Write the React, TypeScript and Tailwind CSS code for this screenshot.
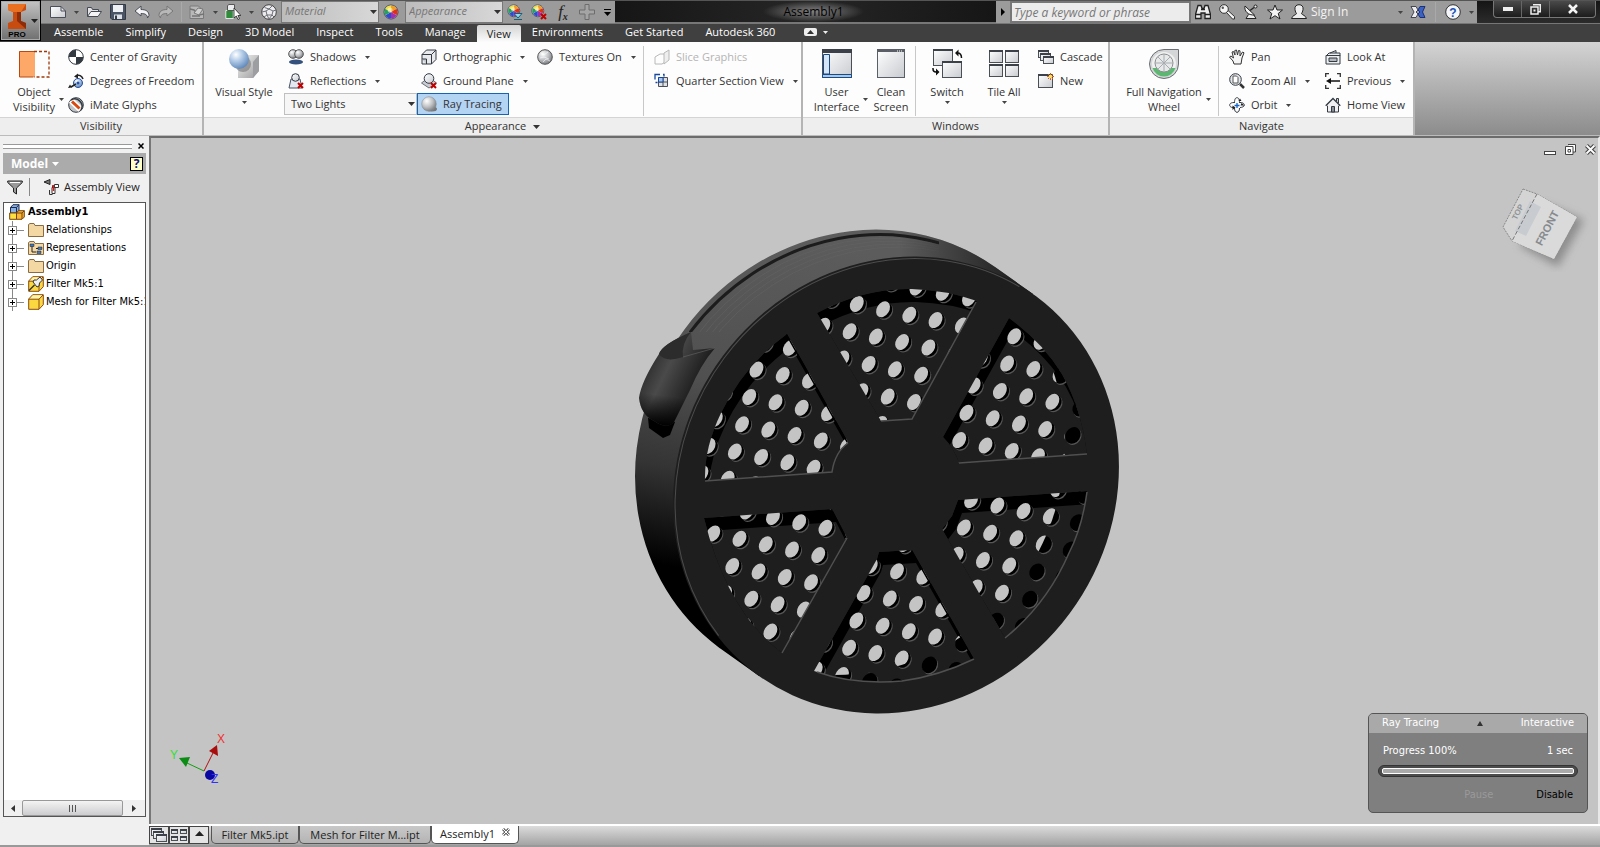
import type { ReactNode } from 'react'

const HOLE_ORIGIN = { x: 783.7, y: 375 }
const HOLE_U = { x: 26.25, y: 5.4 }
const HOLE_V = { x: -7.2, y: 27.3 }

const HOLES = Array.from({ length: 30 * 24 }, (_, n) => {
  const i = (n % 30) - 8
  const j = Math.floor(n / 30) - 8
  return {
    x: HOLE_ORIGIN.x + i * HOLE_U.x + j * HOLE_V.x,
    y: HOLE_ORIGIN.y + i * HOLE_U.y + j * HOLE_V.y,
  }
}).filter((h) => h.x > 690 && h.x < 1100 && h.y > 275 && h.y < 695)

const WINDOWS_PATH = [
  'M818 313 Q865 288 913 289 Q947 290 978 301 L913 419 L882 421 Z',
  'M1010 318 Q1044 343 1063 374 Q1083 410 1088 454 L960 463 Q955 448 944 437 Z',
  'M1088 491 Q1083 528 1070 553 Q1048 604 1006 638 L943 529 L953 516 L959 500 Z',
  'M880 552 L913 550 L975 659 Q940 676 903 681 Q855 685 815 671 L878 559 Z',
  'M705 518 L833 509 L848 538 L783 653 Q728 612 705 518 Z',
  'M788 334 L849 442 Q836 452 833 472 L706 481 Q705 448 722 413 Q745 365 788 334 Z',
].join(' ')

const LIT_EDGES =
  'M977 302 L913 419 L882 421 M1088 454 L960 463 M1088 492 Q1083 528 1070 553 Q1048 604 1006 638 M975 659 Q940 676 903 681 Q855 685 818 672 M848 538 L783 653 M849 443 Q836 452 833 472 L706 481'

const LUG_PATH =
  'M692 332Q664 344 660 354Q642 382 640 398Q642 415 655 421Q668 430 675 422L691 390Q702 364 716 348L694 350z'

function Arrow({ className = '' }: { className?: string }) {
  return (
    <svg className={`shrink-0 ${className}`} width="7" height="4" viewBox="0 0 7 4" fill="currentColor" aria-hidden>
      <path d="M0 0h7L3.500 4z" />
    </svg>
  )
}

function SmallArrow() {
  return (
    <svg className="shrink-0" width="5" height="3" viewBox="0 0 5 3" fill="#444" aria-hidden>
      <path d="M0 0h5L2.500 3z" />
    </svg>
  )
}

function Icon({ size = 16, box = 16, children }: { size?: number; box?: number; children: ReactNode }) {
  return (
    <svg className="shrink-0" width={size} height={size} viewBox={`0 0 ${box} ${box}`} fill="none" aria-hidden>
      {children}
    </svg>
  )
}

function Ball({ x = 8, y = 8, r = 6 }: { x?: number; y?: number; r?: number }) {
  return <circle cx={x} cy={y} r={r} fill="url(#steel)" stroke="#555" />
}

function RedX({ x = 10, y = 10 }: { x?: number; y?: number }) {
  return <path d={`M${x} ${y}l5 5m0 -5l-5 5`} stroke="#c00000" strokeWidth="2" />
}

function Wheel() {
  return (
    <>
      <circle cx="8" cy="8" r="7" fill="#fff" stroke="#445" />
      <path d="M8 8V1.500A6.500 6.500 0 0 1 13.600 4.700Z" fill="#f0a020" />
      <path d="M8 8L13.600 4.700A6.500 6.500 0 0 1 13.600 11.300Z" fill="#e03018" />
      <path d="M8 8L13.600 11.300A6.500 6.500 0 0 1 8 14.500Z" fill="#a030b0" />
      <path d="M8 8V14.500A6.500 6.500 0 0 1 2.400 11.300Z" fill="#3048d0" />
      <path d="M8 8L2.400 11.300A6.500 6.500 0 0 1 2.400 4.700Z" fill="#28a060" />
      <path d="M8 8L2.400 4.700A6.500 6.500 0 0 1 8 1.500Z" fill="#f0e040" />
      <circle cx="7" cy="6" r="2.500" fill="#fff" opacity="0.5" />
    </>
  )
}

function MiniWindow({ x, y, w, h }: { x: number; y: number; w: number; h: number }) {
  return (
    <>
      <rect x={x + 0.5} y={y + 0.5} width={w - 1} height={h - 1} fill="url(#pane)" stroke="#4a4e55" />
      <rect x={x} y={y} width={w} height={Math.max(2, Math.round(h / 8))} fill="#3c4048" />
    </>
  )
}

/* Gradients shared by every icon and by the model */
function Defs() {
  return (
    <svg className="absolute h-0 w-0" aria-hidden>
      <defs>
        <radialGradient id="steel" cx="0.35" cy="0.3" r="0.8">
          <stop offset="0" stopColor="#fff" />
          <stop offset="0.5" stopColor="#bfc1c4" />
          <stop offset="1" stopColor="#6b6e72" />
        </radialGradient>
        <radialGradient id="blueBall" cx="0.35" cy="0.28" r="0.8">
          <stop offset="0" stopColor="#fff" />
          <stop offset="0.4" stopColor="#b4cce8" />
          <stop offset="1" stopColor="#5580b4" />
        </radialGradient>
        <linearGradient id="pane" x1="0" y1="0" x2="1" y2="1">
          <stop offset="0" stopColor="#fff" />
          <stop offset="1" stopColor="#c8cbd0" />
        </linearGradient>
        <linearGradient id="cubeSide" x1="0" y1="0" x2="1" y2="1">
          <stop offset="0" stopColor="#f4f4f4" />
          <stop offset="1" stopColor="#9a9a9c" />
        </linearGradient>
      </defs>
    </svg>
  )
}

function TitleIcon({ label, children }: { label: string; children: ReactNode }) {
  return (
    <button aria-label={label} className="flex h-6 w-6 shrink-0 items-center justify-center">
      {children}
    </button>
  )
}

function TitleArrow({ label }: { label: string }) {
  return (
    <button aria-label={label} className="flex h-6 w-3 shrink-0 items-center justify-center">
      <SmallArrow />
    </button>
  )
}

function TitleSelect({ label }: { label: string }) {
  return (
    <span className="relative h-[22px] w-[98px] shrink-0 border border-[#777] bg-linear-to-r from-[#bcbcbc] to-[#d8d8d8]">
      <select aria-label={label} className="block h-5 w-full appearance-none px-[3px] pb-[2px] text-[11px] leading-[18px] text-[#777] italic outline-none">
        <option>{label}</option>
      </select>
      <Arrow className="pointer-events-none absolute top-2 right-[1px] text-[#333]" />
    </span>
  )
}

function TitleBar() {
  return (
    <header className="flex h-6 border-t border-b border-t-[#555] border-b-[#777] bg-[#9b9b9b]">
      <div className="flex shrink-0 items-center pl-[46px]">
        <TitleIcon label="New">
          <Icon>
            <path d="M.5 2.500H11L15.500 7v6.500H.5z" fill="url(#pane)" stroke="#4a4e58" />
            <path d="M11 2.500V7h4.500" stroke="#4a4e58" />
          </Icon>
        </TitleIcon>
        <TitleArrow label="New options" />
        <TitleIcon label="Open">
          <Icon>
            <path d="M1.500 12.500v-9h4l1 2h6v2" fill="#e4e4e6" stroke="#444a54" />
            <path d="M1.500 12.500L5 7.500h10.500L12 12.500z" fill="#f4f4f6" stroke="#444a54" />
          </Icon>
        </TitleIcon>
        <TitleIcon label="Save">
          <Icon>
            <path d="M.5.5h15v15H2l-1.500-1.500z" fill="#4a5464" stroke="#333a46" />
            <path d="M3 1h10v7H3z" fill="#eef0f4" />
            <path d="M4 10.500h8V15H4z" fill="#dde0e6" />
            <path d="M5 11.500h2V15H5z" fill="#333a46" />
          </Icon>
        </TitleIcon>
        <TitleIcon label="Undo">
          <Icon>
            <path d="M1 7l6-5v3.500c5 0 8 2 8 6l-1.500 2.500c0-3-2-4.500-6.500-4.500V12z" fill="#f4f4f6" stroke="#4a4e58" />
          </Icon>
        </TitleIcon>
        <TitleIcon label="Redo">
          <Icon>
            <path d="M15 7L9 2v3.500c-5 0-8 2-8 6L2.500 14c0-3 2-4.500 6.500-4.500V12z" fill="#b8b8b8" stroke="#777" />
          </Icon>
        </TitleIcon>
        <span className="mx-[3px] h-5 w-px bg-[#a9a9a9]" />
        <TitleIcon label="Update">
          <Icon>
            <path d="M1 2h8.500L14.500 7v7.500H1z" fill="#b8b8b8" stroke="#7a7a7a" />
            <path d="M1 5l4 1 5 5 5-1M3 12h8" stroke="#747474" strokeWidth="1.500" />
            <path d="M9 4l5 1-4 6-5-2z" fill="#d0d0d0" stroke="#7a7a7a" />
          </Icon>
        </TitleIcon>
        <TitleArrow label="Update options" />
        <TitleIcon label="Select">
          <Icon>
            <path d="M.8 6.500h7.500v8H.8z" fill="#2f8a3a" stroke="#e4e8e4" />
            <path d="M2.500 1.500L4 .5h5.500v5l-1 1h-6z" fill="#ececee" stroke="#555" />
            <path d="M9 4v10l2.300-2 1.700 3.500 1.500-.8-1.600-3.200h3z" fill="#fff" stroke="#222" strokeWidth="0.8" />
          </Icon>
        </TitleIcon>
        <TitleArrow label="Select options" />
        <TitleIcon label="Material browser">
          <Icon>
            <circle cx="8" cy="8" r="7.300" fill="#ececee" stroke="#444" />
            <path
              d="M3.500 3.500L8 5l3-3M1 8l4-1 3-2 4 2 3-1M5 7l1 4 5 0 1-4M6 11l-3 2M11 11l2 2M6 11l2 4 3-4"
              stroke="#6c7078"
            />
          </Icon>
        </TitleIcon>
        <TitleSelect label="Material" />
        <TitleIcon label="Appearance browser">
          <Icon>
            <Wheel />
          </Icon>
        </TitleIcon>
        <span className="w-[2px]" />
        <TitleSelect label="Appearance" />
        <TitleIcon label="Adjust appearance">
          <Icon>
            <g transform="scale(.85)">
              <Wheel />
            </g>
            <path d="M7 9.500h8L11 14z" fill="#8fd8f0" stroke="#14607c" />
            <path d="M7 15.500h8" stroke="#14607c" />
          </Icon>
        </TitleIcon>
        <TitleIcon label="Clear appearance">
          <Icon>
            <g transform="scale(.85)">
              <Wheel />
            </g>
            <RedX />
          </Icon>
        </TitleIcon>
        <TitleIcon label="Parameters">
          <span className="font-['Liberation_Serif',serif] text-[17px] leading-5 text-[#222] italic">
            f<sub className="text-[10px] font-bold">x</sub>
          </span>
        </TitleIcon>
        <TitleIcon label="Add">
          <Icon>
            <path d="M6 .5h4V6h5.500v4H10v5.500H6V10H.5V6H6z" fill="#a4a4a4" stroke="#6c6c6c" />
          </Icon>
        </TitleIcon>
        <button aria-label="Customize" className="flex w-4 flex-col items-center gap-[2px] text-black">
          <span className="h-px w-[7px] bg-black" />
          <Arrow />
        </button>
      </div>

      <div className="flex flex-1 items-center justify-center border-b border-[#777] bg-linear-to-r from-[#161616] via-[#262626] to-[#161616] pl-4">
        <span className="bg-[radial-gradient(closest-side,#808080,#555,transparent)] px-5 text-[12px] leading-[21px] text-black">
          Assembly1
        </span>
      </div>

      <div className="flex shrink-0 items-center">
        <button aria-label="Collapse search" className="flex w-[14px] justify-center">
          <svg width="4" height="8" viewBox="0 0 4 8" aria-hidden>
            <path d="M0 0L4 4L0 8z" />
          </svg>
        </button>
        <input
          aria-label="Search"
          placeholder="Type a keyword or phrase"
          className="h-[22px] w-[181px] border-2 border-[#777] bg-[#ececec] px-[2px] text-[12px] italic outline-none placeholder:text-[#777]"
        />
        <TitleIcon label="Find">
          <Icon>
            <path d="M3 1.500h3l1 3h2l1-3h3l2.500 9v4H10V9H6v5.500H.5v-4z" fill="#eee" stroke="#222" strokeWidth="1.300" />
            <path d="M6 5.500h4M.5 10.500H6M10 10.500h5.500" stroke="#222" strokeWidth="1.300" />
          </Icon>
        </TitleIcon>
        <TitleIcon label="Subscription">
          <Icon>
            <path d="M7.500 8.500l6 6.500h2v-2.500L9 6.500" fill="#f4f4f4" stroke="#333" />
            <circle cx="5" cy="5" r="4.300" fill="#f4f4f4" stroke="#333" />
            <circle cx="3.800" cy="3.800" r="1.200" fill="#555" />
          </Icon>
        </TitleIcon>
        <TitleIcon label="Communication">
          <Icon>
            <path d="M5.500 10.500L3 14.500h10l-2.500-4" fill="#eee" stroke="#222" />
            <path d="M2 2c-1 5 3 9.500 9.500 9z" fill="#f4f4f4" stroke="#222" />
            <path d="M7 6.500l4-3" stroke="#222" strokeWidth="1.300" />
            <circle cx="12.500" cy="2.500" r="1.500" fill="#eee" stroke="#222" />
          </Icon>
        </TitleIcon>
        <TitleIcon label="Favorites">
          <Icon>
            <path d="M8 1l2 5h5.500l-4.300 3.500L13 15l-5-3.300L3 15l1.800-5.500L.5 6H6z" fill="#f4f4f4" stroke="#222" />
          </Icon>
        </TitleIcon>
        <TitleIcon label="Account">
          <Icon>
            <path d="M8 .7c3 0 4.500 2 4 5-.3 2-1 3-1.500 4 1 1.500 4 1.500 5 4.800H.5c1-3.300 4-3.300 5-4.800C5 8.700 4.300 7.700 4 5.700c-.5-3 1-5 4-5z" fill="#eee" stroke="#222" />
          </Icon>
        </TitleIcon>
        <button className="flex w-[92px] items-center justify-between text-[12px] leading-5 text-[#f4f4f4]">
          Sign In
          <SmallArrow />
        </button>
        <span className="w-[3px]" />
        <TitleIcon label="Exchange">
          <Icon>
            <path d="M1 2.500h5L8 6l-2 2 2 2-2 3.500H1L4 8z" fill="#eee" stroke="#445" />
            <path d="M15 2.500h-5L8 6l2 2-2 2 2 3.500h5L12.500 8z" fill="#3a62c0" stroke="#1c2f78" />
          </Icon>
        </TitleIcon>
        <span className="mx-[5px] h-5 w-px bg-[#a9a9a9]" />
        <TitleIcon label="Help">
          <Icon>
            <circle cx="8" cy="8" r="7.300" fill="#f4f6fa" stroke="#333" />
            <text x="8" y="12.500" textAnchor="middle" className="fill-[#1a50b8] font-['Liberation_Sans',sans-serif] text-[12px] font-bold">
              ?
            </text>
          </Icon>
        </TitleIcon>
        <TitleArrow label="Help options" />
      </div>

      <div className="flex w-[123px] shrink-0 justify-end bg-linear-to-b from-[#151515] to-[#2c2c2c] pr-1">
        <div className="flex h-[17px] rounded-b-[4px] border border-t-0 border-[#777] bg-linear-to-b from-[#4a4a4a] to-[#1c1c1c]">
          <button aria-label="Minimize" className="flex w-[28px] items-center justify-center border-r border-[#666]">
            <span className="h-1 w-[10px] bg-[#eee]" />
          </button>
          <button aria-label="Restore" className="flex w-[28px] items-center justify-center border-r border-[#666]">
            <Icon size={11} box={11}>
              <path d="M3 .8h7.300v7H8M1 3h7v7H1z" stroke="#eee" strokeWidth="1.500" />
              <path d="M3.500 5.500h2v2h-2z" fill="#eee" />
            </Icon>
          </button>
          <button aria-label="Close" className="flex w-[45px] items-center justify-center">
            <Icon size={10} box={10}>
              <path d="M1 1l8 8M9 1L1 9" stroke="#f4f4f4" strokeWidth="2.500" />
            </Icon>
          </button>
        </div>
      </div>
    </header>
  )
}

const TABS = [
  'Assemble',
  'Simplify',
  'Design',
  '3D Model',
  'Inspect',
  'Tools',
  'Manage',
  'View',
  'Environments',
  'Get Started',
  'Autodesk 360',
]

function TabRow() {
  return (
    <nav className="flex h-[18px] items-stretch bg-[#404040] pl-[43px] text-[11px] leading-4 text-white">
      {TABS.map((tab) => (
        <button
          key={tab}
          className={
            tab === 'View'
              ? 'mt-px rounded-t-[2px] bg-linear-to-b from-[#d4d4d4] to-[#fcfcfc] px-[10px] text-[#222]'
              : 'px-[11px] pb-[2px]'
          }
        >
          {tab}
        </button>
      ))}
      <button aria-label="Minimize ribbon" className="ml-[18px] flex items-center gap-[6px] pb-[2px]">
        <span className="flex h-2 w-[13px] items-center justify-center rounded-[2px] bg-[#eee] text-[#333]">
          <Arrow className="rotate-180" />
        </span>
        <svg width="5" height="3" viewBox="0 0 5 3" fill="#eee" aria-hidden>
          <path d="M0 0h5L2.500 3z" />
        </svg>
      </button>
    </nav>
  )
}

function Panel({ title, arrow, className, children }: { title: string; arrow?: boolean; className: string; children: ReactNode }) {
  return (
    <section className={`flex shrink-0 flex-col border-r-2 border-[#b4b4b4] bg-[#fdfdfd] ${className}`}>
      <div className="flex h-[75px] pt-[3px]">{children}</div>
      <div className="flex h-[18px] items-center justify-center gap-[7px] border-t border-[#d4d4d4] bg-[#eee]">
        {title}
        {arrow && <Arrow />}
      </div>
    </section>
  )
}

function Row({ icon, label, arrow, disabled }: { icon: ReactNode; label: string; arrow?: boolean; disabled?: boolean }) {
  return (
    <button disabled={disabled} className="flex h-6 items-center gap-[6px] whitespace-nowrap disabled:text-[#b4b4b4]">
      {icon}
      {label}
      {arrow && (
        <span className="pl-[3px]">
          <SmallArrow />
        </span>
      )}
    </button>
  )
}

function BigButton({ icon, lines, arrow, className }: { icon: ReactNode; lines: string[]; arrow?: 'side' | 'below'; className: string }) {
  return (
    <button className={`flex shrink-0 flex-col items-center pt-[3px] leading-[15px] whitespace-nowrap ${className}`}>
      {icon}
      <span className="flex items-center gap-1 pt-1">
        {arrow === 'side' && <span className="w-[5px]" />}
        <span>
          {lines.map((line) => (
            <span key={line} className="block">
              {line}
            </span>
          ))}
        </span>
        {arrow === 'side' && <SmallArrow />}
      </span>
      {arrow === 'below' && (
        <span className="pt-[2px]">
          <SmallArrow />
        </span>
      )}
    </button>
  )
}

function Divider() {
  return <span className="my-px w-px shrink-0 bg-[#c8c8c8]" />
}

function Ribbon() {
  return (
    <div className="flex h-[93px] text-[11px] text-[#333]">
      <Panel title="Visibility" className="w-[204px]">
        <BigButton
          className="w-[68px]"
          arrow="side"
          lines={['Object', 'Visibility']}
          icon={
            <Icon size={32} box={32}>
              <path d="M1 3h16v26H1z" fill="#fda868" />
              <path d="M1.500 29V3.500H16" stroke="#b84a10" />
              <path d="M1.500 29h14" stroke="#b84a10" />
              <path d="M16 3.500h15V29H16" stroke="#a03808" strokeDasharray="3 2" strokeWidth="1.300" />
            </Icon>
          }
        />
        <div>
          <Row
            label="Center of Gravity"
            icon={
              <Icon>
                <circle cx="8" cy="8" r="7.300" fill="#fff" stroke="#333a42" />
                <path d="M8 8V.7A7.300 7.300 0 0 0 .7 8zM8 8v7.300A7.300 7.300 0 0 0 15.300 8z" fill="#333a42" />
              </Icon>
            }
          />
          <Row
            label="Degrees of Freedom"
            icon={
              <Icon>
                <circle cx="10" cy="10" r="4.500" fill="url(#blueBall)" stroke="#2850a0" />
                <circle cx="10" cy="10" r="1.500" fill="#2850a0" />
                <path d="M8 11l-5 3M8 3c3-2 6 0 7 3" stroke="#222" strokeWidth="1.500" />
                <path d="M0 15l2-3.500 2 3zM6 3.500L10 .5v5z" fill="#222" />
              </Icon>
            }
          />
          <Row
            label="iMate Glyphs"
            icon={
              <Icon>
                <circle cx="8" cy="8" r="7.300" fill="#c0c4c8" stroke="#333a42" />
                <path d="M3 3.500l9.500 9" stroke="#fff" strokeWidth="6" />
                <path d="M4 4.500l7.500 7" stroke="#d84810" strokeWidth="3" />
                <path d="M3 3a7.300 7.300 0 0 1 10 10" stroke="#333a42" strokeWidth="1.500" />
              </Icon>
            }
          />
        </div>
      </Panel>

      <Panel title="Appearance" arrow className="w-[599px]">
        <BigButton
          className="w-[80px]"
          arrow="below"
          lines={['Visual Style']}
          icon={
            <Icon size={32} box={32}>
              <path d="M10 14l8-7h13v16l-6 7H10z" fill="url(#cubeSide)" />
              <path d="M25 14l6-7v16l-6 7z" fill="#9c9ea2" />
              <circle cx="15" cy="16" r="8" fill="#777" opacity="0.6" />
              <circle cx="11" cy="11" r="10" fill="url(#blueBall)" />
            </Icon>
          }
        />
        <div className="w-[133px]">
          <div className="pl-1">
            <Row
              arrow
              label="Shadows"
              icon={
                <Icon>
                  <ellipse cx="8" cy="13" rx="7" ry="2.500" fill="#34507c" />
                  <Ball x={5} y={5} r={4.300} />
                  <Ball x={11} y={5} r={4.300} />
                </Icon>
              }
            />
            <Row
              arrow
              label="Reflections"
              icon={
                <Icon>
                  <path d="M1 15l2-9h9l2 9z" fill="#e4e8f0" stroke="#4a5464" />
                  <circle cx="7.500" cy="4.500" r="3.800" fill="url(#pane)" stroke="#333a46" />
                  <RedX />
                </Icon>
              }
            />
          </div>
          <span className="relative block h-[22px] w-[133px] border border-[#c0c0c0] bg-[#f6f6f6]">
            <select aria-label="Lights" className="h-full w-full appearance-none px-[6px] leading-5 outline-none">
              <option>Two Lights</option>
            </select>
            <Arrow className="pointer-events-none absolute top-2 right-[1px]" />
          </span>
        </div>
        <div className="w-[120px]">
          <div className="pl-1">
            <Row
              arrow
              label="Orthographic"
              icon={
                <Icon>
                  <path d="M1 5.500L5.500 1H15v9.500L10.500 15H1z" fill="#e8eaee" stroke="#333a42" />
                  <path d="M1 5.500h9.500V15M10.500 5.500L15 1" stroke="#333a42" />
                  <path d="M1 10h4.500v5" stroke="#333a42" fill="#c8ccd2" />
                </Icon>
              }
            />
            <Row
              arrow
              label="Ground Plane"
              icon={
                <Icon>
                  <path d="M.5 10L5 6.500h6l4.500 3.500L8 15z" fill="#c8ccd2" stroke="#6a6e76" />
                  <circle cx="8" cy="5.500" r="4.800" fill="url(#pane)" stroke="#333a46" />
                  <RedX />
                </Icon>
              }
            />
          </div>
          <button className="flex h-[22px] w-[92px] items-center gap-[6px] border border-[#1464b8] bg-[#b4d4f4] pl-[3px] whitespace-nowrap">
            <Icon>
              <ellipse cx="11" cy="13" rx="5" ry="2.500" fill="#777" />
              <circle cx="8" cy="8" r="7.300" fill="url(#steel)" stroke="#888" strokeWidth="0.500" />
            </Icon>
            Ray Tracing
          </button>
        </div>
        <div className="w-[106px]">
          <Row
            arrow
            label="Textures On"
            icon={
              <Icon>
                <Ball r={7.300} />
                <path d="M4 4l3 2 4-3M3 9l4-1 5 2M6 13l3-3 4 2" stroke="#fff" opacity="0.6" />
              </Icon>
            }
          />
        </div>
        <Divider />
        <div className="pl-[10px]">
          <Row
            disabled
            label="Slice Graphics"
            icon={
              <Icon>
                <path d="M1 8l5-3h5v8l-3 2H1z" stroke="#b8b8b8" />
                <path d="M10 4l5-3v10l-5 4z" fill="#eee" stroke="#b8b8b8" />
              </Icon>
            }
          />
          <Row
            arrow
            label="Quarter Section View"
            icon={
              <Icon>
                <path d="M4.500 4.500h9v9h-9zM9 4.500v9M4.500 9h9" fill="#dde0e4" stroke="#4a4e58" />
                <path d="M1 6.500V1.500h5M9 1.500h1v2M1.500 9.500h2" stroke="#1448a0" strokeWidth="1.300" />
                <path d="M4.500 4.500h4.500V9H4.500z" fill="#a8c4e8" stroke="#1448a0" />
              </Icon>
            }
          />
        </div>
      </Panel>

      <Panel title="Windows" className="w-[307px]">
        <BigButton
          className="w-[67px]"
          arrow="side"
          lines={['User', 'Interface']}
          icon={
            <Icon size={32} box={32}>
              <MiniWindow x={1} y={1} w={30} h={29} />
              <path d="M2.500 6.500h6V26h-6z" fill="#d4e6f8" stroke="#1c4a84" />
              <path d="M1.500 26.500h29v3h-29z" fill="#a8c8e8" stroke="#1c4a84" />
            </Icon>
          }
        />
        <BigButton
          className="w-[42px]"
          lines={['Clean', 'Screen']}
          icon={
            <Icon size={32} box={32}>
              <rect x="2.500" y="1.500" width="27" height="28" fill="url(#pane)" stroke="#5a5e66" />
              <path d="M2 3h28" stroke="#5a5e66" strokeWidth="2" />
              <path d="M22 3h6" stroke="#fff" strokeDasharray="1 1" />
            </Icon>
          }
        />
        <span className="w-[3px]" />
        <Divider />
        <BigButton
          className="w-[62px]"
          arrow="below"
          lines={['Switch']}
          icon={
            <Icon size={32} box={32}>
              <MiniWindow x={2} y={1} w={20} h={17} />
              <MiniWindow x={11} y={13} w={20} h={17} />
              <path d="M25 5h1.500q4 0 4 5M2 20v1q0 3 3 3" stroke="#111" strokeWidth="1.500" />
              <path d="M24 5l3.500-3.500v7zM8.500 24L5 20.500v7z" fill="#111" />
            </Icon>
          }
        />
        <BigButton
          className="w-[52px]"
          arrow="below"
          lines={['Tile All']}
          icon={
            <Icon size={32} box={32}>
              <MiniWindow x={1} y={2} w={14} h={13} />
              <MiniWindow x={17} y={2} w={14} h={13} />
              <MiniWindow x={1} y={16} w={14} h={13} />
              <MiniWindow x={17} y={16} w={14} h={13} />
            </Icon>
          }
        />
        <div className="pl-[8px]">
          <Row
            label="Cascade"
            icon={
              <Icon>
                <MiniWindow x={0} y={1} w={11} h={8} />
                <MiniWindow x={2} y={4} w={11} h={8} />
                <MiniWindow x={5} y={7} w={11} h={8} />
              </Icon>
            }
          />
          <Row
            label="New"
            icon={
              <Icon>
                <MiniWindow x={0} y={1} w={15} h={14} />
                <path d="M12.500 0v7M9 3.500h7M10 1l5 5M15 1l-5 5" stroke="#d85818" />
                <circle cx="12.500" cy="3.500" r="1.800" fill="#fce060" />
              </Icon>
            }
          />
        </div>
      </Panel>

      <Panel title="Navigate" className="w-[305px]">
        <BigButton
          className="w-[108px]"
          arrow="side"
          lines={['Full Navigation', 'Wheel']}
          icon={
            <Icon size={32} box={32}>
              <path d="M16 1.500h14.500V16A14.500 14.500 0 1 1 16 1.500z" fill="#d4d6d8" stroke="#6a6e72" />
              <circle cx="16" cy="16" r="12" fill="#f0f0f0" />
              <path d="M4.500 20h23a12 12 0 0 1-23 0z" fill="#5cb870" />
              <circle cx="16" cy="15" r="9" fill="#e8eaea" stroke="#8a8e92" />
              <path d="M16 6v18M7 15h18M10 9l12 12M22 9L10 21" stroke="#a8acb0" />
            </Icon>
          }
        />
        <Divider />
        <div className="w-[106px] pl-[10px]">
          <Row
            label="Pan"
            icon={
              <Icon>
                <path
                  d="M5 15l-1-3-3.500-4 1.500-1 2.500 2L3 3l1.500-.5L6 6 5.800 1.500 7.500 1 8.500 6 9.500 1.500l1.500.3L11 7l2.500-4 1.500.8L13 9l-1 6z"
                  fill="#f4f4f4"
                  stroke="#333"
                />
              </Icon>
            }
          />
          <Row
            arrow
            label="Zoom All"
            icon={
              <Icon>
                <circle cx="6.500" cy="6.500" r="5.800" fill="#e4e6ea" stroke="#333a42" />
                <path d="M4 3h3.500L9 4.500V10H4z" fill="#fff" stroke="#555" />
                <path d="M11 11l4 4" stroke="#333" strokeWidth="2.500" />
              </Icon>
            }
          />
          <Row
            arrow
            label="Orbit"
            icon={
              <Icon>
                <path d="M5 5.500C1 5.500.5 7.500.7 8.500S2 10.500 4 10.500M11 5.500c4 0 4.500 2 4.300 3S13 10.500 11 10.500" stroke="#333a42" />
                <path d="M5.500 6C5.500 2 6.500.7 8 .7S10.500 2 10.500 6M5.500 11c0 3 1 4.300 2.500 4.300s2.500-1.300 2.500-4.300" stroke="#333a42" />
                <path d="M3.500 8.500l3 2-3 2.500zM12.500 6l3 2.500-4 0zM9.500 4h3l-1.500-2.500z" fill="#222" />
                <path d="M8 6v5M5.500 8.500h5" stroke="#1464c8" strokeWidth="1.300" />
              </Icon>
            }
          />
        </div>
        <div>
          <Row
            label="Look At"
            icon={
              <Icon>
                <path d="M1 6.500h14V15H1zM2 6l2-2h11v3M5 4l6-2.500V4" fill="#eceef0" stroke="#333a42" />
                <path d="M4 9h8v3.500H4z" fill="#b4b8be" stroke="#333a42" />
              </Icon>
            }
          />
          <Row
            arrow
            label="Previous"
            icon={
              <Icon>
                <path d="M.7 4V.7H4M12 .7h3.300V4M15.300 12v3.300H12M4 15.300H.7V12" stroke="#333" strokeWidth="1.300" />
                <path d="M5 8h10" stroke="#111" strokeWidth="1.500" />
                <path d="M1 8l5-3v6z" fill="#111" />
              </Icon>
            }
          />
          <Row
            label="Home View"
            icon={
              <Icon>
                <path d="M11.500 4V1.500h2V6" fill="#ccc" stroke="#333a42" />
                <path d="M2.500 8v7h11V8" fill="#f0f0f2" stroke="#333a42" />
                <path d="M.7 8.700L8 1.500l7.300 7.200" fill="#f0f0f2" stroke="#333a42" strokeWidth="1.300" />
                <path d="M6.500 9.500h3V15h-3z" fill="#8a8e96" stroke="#333a42" />
              </Icon>
            }
          />
        </div>
      </Panel>
      <div className="flex-1 bg-linear-to-b from-[#d4d4d4] to-[#8c8c8c]" />
    </div>
  )
}

function FolderIcon({ nodes }: { nodes?: boolean }) {
  return (
    <Icon>
      <path d="M.5 14.500V2.500l1.500-1h4l1 2h8.500v11z" fill="#f4d8a4" stroke="#8a6c44" />
      {nodes && (
        <>
          <path d="M2 5.500h4M4 6v6h4M8 8.500h3" stroke="#222" />
          <path d="M2 4h4v2.500H2zM10 7h4v2.500h-4zM9 11h4v2.500H9z" fill="#3c78c0" stroke="#222" strokeWidth="0.500" />
        </>
      )}
    </Icon>
  )
}

function PartIcon({ pinned }: { pinned?: boolean }) {
  return (
    <Icon>
      <path d="M.7 5l4-4.300h10.600v10L11 15.300H.7z" fill="#fcd840" stroke="#8a4a10" />
      <path d="M1.500 5L5 1.300h9.500L11 5z" fill="#fff4a8" />
      <path d="M.7 5.200H11v10M11 5.200L15 1" stroke="#8a4a10" />
      {pinned && (
        <>
          <path d="M5 6l4 5 2-1 .5-3 3-3-2.500-3L8.500 4 6 4z" fill="#eee" stroke="#333" />
          <path d="M6.500 9L1 14.500" stroke="#333" strokeWidth="1.500" />
        </>
      )}
    </Icon>
  )
}

const TREE = [
  { label: 'Relationships', icon: <FolderIcon /> },
  { label: 'Representations', icon: <FolderIcon nodes /> },
  { label: 'Origin', icon: <FolderIcon /> },
  { label: 'Filter Mk5:1', icon: <PartIcon pinned /> },
  { label: 'Mesh for Filter Mk5:1', icon: <PartIcon /> },
]

function ModelBrowser() {
  return (
    <aside className="flex w-[149px] shrink-0 flex-col bg-[#f0f0f0] px-[3px]">
      <div className="flex h-[17px] items-center gap-[6px] pt-[3px]">
        <span className="h-[5px] flex-1 border-y border-[#999] bg-white" />
        <button aria-label="Close browser" className="mr-[2px]">
          <svg width="6" height="6" viewBox="0 0 6 6" aria-hidden>
            <path d="M.5.5l5 5M5.500.5l-5 5" stroke="#000" strokeWidth="1.500" />
          </svg>
        </button>
      </div>
      <div className="flex h-[21px] items-center justify-between bg-[#ababab] pr-[3px] pl-2 text-[12px] font-bold text-white">
        <button className="flex items-center gap-1">
          Model
          <Arrow />
        </button>
        <button
          aria-label="Browser help"
          className="h-[14px] w-[13px] border border-black bg-[#ffffc8] text-center text-[12px] leading-3 text-[#101080]"
        >
          ?
        </button>
      </div>
      <div className="mb-[2px] flex h-[26px] items-center text-[11px] text-[#222]">
        <button aria-label="Filter" className="pl-1">
          <Icon>
            <path d="M.7 2h14.600v1.500L9.500 9v6l-3-2V9L.7 3.500z" fill="#9a9a9a" stroke="#222" />
            <path d="M3 3.500h10" stroke="#fff" />
          </Icon>
        </button>
        <span className="mr-[14px] ml-[6px] h-[18px] w-px bg-[#888]" />
        <button className="flex items-center gap-[4px] whitespace-nowrap">
          <Icon>
            <path d="M0 3l6-2.500v5z" fill="#777" stroke="#222" />
            <path d="M8.500 9.500v-3h3M5.500 11v4.500h3" stroke="#333" />
            <path d="M10.500 5.500h4v3h-4zM8 8.500h3v6H8z" fill="#fff" stroke="#333" />
            <path d="M9.500 6v6" stroke="#e01818" strokeWidth="1.500" />
          </Icon>
          Assembly View
        </button>
      </div>
      <div className="flex flex-1 flex-col border border-[#555] bg-white font-['DejaVu_Sans_Condensed','Noto_Sans',sans-serif] text-[11px] text-black">
        <div className="flex h-[18px] items-center gap-[3px] pl-[5px] font-bold">
          <Icon>
            <path d="M1.500 3.500L4 .7h6v6L7.500 9h-6z" fill="#88b0e0" stroke="#1c2c50" />
            <path d="M1.500 3.500h6V9M7.500 3.500L10 .7" stroke="#1c2c50" />
            <path d="M.7 9h6.800v6.300H.7z" fill="#fce040" stroke="#7a4008" />
            <path d="M7.500 9L9.500 6.700h5.800V13L13 15.300H7.500z" fill="#f8b838" stroke="#7a4008" />
            <path d="M7.500 9H13v6M13 9l2.300-2.300" stroke="#7a4008" />
          </Icon>
          Assembly1
        </div>
        <ul className="flex-1 overflow-hidden">
          {TREE.map((item) => (
            <li key={item.label} className="flex h-[18px] items-center whitespace-nowrap">
              <button aria-label={`Expand ${item.label}`} className="ml-1">
                <svg width="17" height="18" viewBox="0 0 17 18" fill="none" aria-hidden>
                  <path d="M4.500 0v18M9 9.500h7" stroke="#888" />
                  <rect x=".5" y="5.500" width="8" height="8" fill="#fff" stroke="#888" />
                  <path d="M2 9.500h5M4.500 7v5" stroke="#000" />
                </svg>
              </button>
              <span className="ml-[3px] flex items-center gap-[2px]">
                {item.icon}
                {item.label}
              </span>
            </li>
          ))}
        </ul>
        <div className="flex h-4 items-stretch bg-[#f0f0f0]">
          <button aria-label="Scroll left" className="flex w-[18px] items-center justify-center">
            <svg width="4" height="7" viewBox="0 0 4 7" aria-hidden>
              <path d="M4 0v7L0 3.500z" fill="#333" />
            </svg>
          </button>
          <span className="flex w-[101px] items-center justify-center gap-[2px] rounded-[2px] border border-[#999] bg-linear-to-b from-[#f4f4f4] to-[#cdcdd0]">
            <span className="h-[7px] w-px bg-[#555]" />
            <span className="h-[7px] w-px bg-[#555]" />
            <span className="h-[7px] w-px bg-[#555]" />
          </span>
          <button aria-label="Scroll right" className="flex flex-1 items-center justify-center">
            <svg width="4" height="7" viewBox="0 0 4 7" aria-hidden>
              <path d="M0 0v7l4-3.500z" fill="#333" />
            </svg>
          </button>
        </div>
      </div>
      <div className="-mx-[3px] h-[30px] shrink-0 border-b-2 border-[#999]" />
    </aside>
  )
}

function FilterModel() {
  return (
    <svg className="shrink-0" width="500" height="504" viewBox="626 229 500 504" role="img" aria-label="Filter assembly">
      <defs>
        <linearGradient id="body" gradientUnits="userSpaceOnUse" x1="760" y1="230" x2="690" y2="570">
          <stop offset="0" stopColor="#5c5c5c" />
          <stop offset="0.450" stopColor="#505050" />
          <stop offset="0.720" stopColor="#343434" />
          <stop offset="1" stopColor="#000" />
        </linearGradient>
        <linearGradient id="bodyFade" gradientUnits="userSpaceOnUse" x1="900" y1="0" x2="1020" y2="0">
          <stop offset="0" stopColor="#1e1e1e" stopOpacity="0" />
          <stop offset="1" stopColor="#1e1e1e" />
        </linearGradient>
        <linearGradient id="lug" gradientUnits="userSpaceOnUse" x1="645" y1="375" x2="692" y2="398">
          <stop offset="0" stopColor="#303030" />
          <stop offset="0.350" stopColor="#4a4a4a" />
          <stop offset="1" stopColor="#1c1c1c" />
        </linearGradient>
        <linearGradient id="lugShade" gradientUnits="userSpaceOnUse" x1="668" y1="396" x2="664" y2="426">
          <stop offset="0" stopColor="#000" stopOpacity="0" />
          <stop offset="1" stopColor="#000" />
        </linearGradient>
        <clipPath id="hull">
          <ellipse cx="859" cy="458" rx="235" ry="216" transform="rotate(-53.400 859 458)" />
          <path d="M996 267L1034 294L760 676L722 649z" />
        </clipPath>
        <clipPath id="openings">
          <path d={WINDOWS_PATH} />
        </clipPath>
        <clipPath id="rear">
          <circle cx="835" cy="444" r="231" />
        </clipPath>
        <clipPath id="upper">
          <path d="M690 225H940V332H690z" />
        </clipPath>
      </defs>

      <g clipPath="url(#hull)">
        <path d="M620 220H1060V700H620z" fill="url(#body)" />
        <g clipPath="url(#upper)" fill="none">
          <ellipse cx="863" cy="463" rx="235" ry="216" transform="rotate(-53.400 863 463)" stroke="#1c1c1c" strokeWidth="3" />
          {[10, 14, 18, 22].map((d) => (
            <ellipse
              key={d}
              cx={859 + d}
              cy={458 + d * 0.75}
              rx="234"
              ry="215"
              transform={`rotate(-53.400 ${859 + d} ${458 + d * 0.75})`}
              stroke="#636363"
              strokeWidth="0.600"
            />
          ))}
        </g>
        <path d="M880 220H1050V320H880z" fill="url(#bodyFade)" />
      </g>

      {/* Snap lug */}
      <path d="M649 418L650 428L664 438L671 435L676 422z" fill="#000" />
      <path d={LUG_PATH} fill="url(#lug)" />
      <path d={LUG_PATH} fill="url(#lugShade)" />
      <path d="M692 332Q662 345 660 354Q666 363 684 357Q682 344 692 332z" fill="#2c2c2c" />
      <path d="M684 357L716 348" stroke="#666" strokeWidth="0.600" />

      <ellipse cx="897" cy="485" rx="235" ry="216" transform="rotate(-53.400 897 485)" fill="#1e1e1e" />
      <ellipse
        cx="898"
        cy="486"
        rx="234"
        ry="215"
        transform="rotate(-53.400 898 486)"
        fill="none"
        stroke="#4c4c4c"
        strokeDasharray="0 760 630 1000"
      />

      {/* Perforated mesh behind the six openings */}
      <g clipPath="url(#openings)">
        <path d={WINDOWS_PATH} fill="#000" />
        <path d={WINDOWS_PATH} fill="#1e1e1e" transform="translate(4 13)" />
        {HOLES.map((h) => (
          <g key={`${h.x}-${h.y}`} transform={`translate(${h.x} ${h.y}) rotate(32)`}>
            <ellipse cx="3.200" cy="0.500" rx="7.200" ry="8.800" fill="#555" />
            <ellipse cx="1.800" cy="0" rx="7.300" ry="8.700" fill="#000" />
          </g>
        ))}
        <g clipPath="url(#rear)" fill="#c4c4c4">
          {HOLES.map((h) => (
            <ellipse key={`${h.x}-${h.y}`} cx={h.x} cy={h.y} rx="6.200" ry="8.600" transform={`rotate(32 ${h.x} ${h.y})`} />
          ))}
        </g>
        <path d="M788 334L849 442M833 509L848 538M913 550L975 659" stroke="#000" strokeWidth="3" />
      </g>
      <path d={LIT_EDGES} fill="none" stroke="#505050" strokeWidth="1.500" />
    </svg>
  )
}

function ViewCube() {
  return (
    <svg className="absolute top-[44px] right-[2px]" width="100" height="90" viewBox="1496 181 100 90" role="img" aria-label="View cube">
      <defs>
        <filter id="soft" x="-50%" y="-50%" width="200%" height="200%">
          <feGaussianBlur stdDeviation="4" />
        </filter>
      </defs>
      <path d="M1545 203L1584 219L1558 266L1520 245z" fill="#777" opacity="0.700" filter="url(#soft)" />
      <path d="M1523 188L1537 193L1577 216L1554 258L1512 240L1503 226z" fill="#d4d4d4" stroke="#888" strokeDasharray="2 1" />
      <path d="M1537 193L1577 216L1554 258L1512 240z" fill="#dadada" />
      <path d="M1530 200L1541 206L1526 235L1515 230z" fill="#c8ccd0" />
      <path d="M1537 193L1512 240" stroke="#777" strokeDasharray="4 2" />
      <text x="1547" y="227" textAnchor="middle" dominantBaseline="central" transform="rotate(-62 1547 227)" className="fill-[#868a8e] font-['Liberation_Sans',sans-serif] text-[11px] font-bold">
        FRONT
      </text>
      <text x="1518" y="211" textAnchor="middle" dominantBaseline="central" transform="rotate(-62 1518 211)" className="fill-[#909498] font-['Liberation_Sans',sans-serif] text-[8px] font-bold">
        TOP
      </text>
    </svg>
  )
}

function Triad() {
  return (
    <svg className="absolute bottom-[34px] left-[16px]" width="60" height="60" viewBox="167 730 60 60" role="img" aria-label="Axis triad">
      <path d="M204 771L214 751" stroke="#b01010" />
      <path d="M217 745L209 751L218 756z" fill="#a80c0c" />
      <path d="M204 771L187 763" stroke="#10a010" />
      <path d="M179 758L190 757L186 767z" fill="#0c8c14" />
      <circle cx="210" cy="775" r="5" fill="#0808a0" />
      <g className="font-['Liberation_Sans',sans-serif] text-[12px]">
        <text x="217" y="743" fill="#f03030">X</text>
        <text x="170" y="759" fill="#30e030">Y</text>
        <text x="211" y="783" fill="#3030f8">Z</text>
      </g>
    </svg>
  )
}

function RayTracingPanel() {
  return (
    <section className="absolute right-[10px] bottom-[11px] w-[220px] overflow-hidden rounded-[5px] border border-[#555] bg-[#7f7f7f] font-['DejaVu_Sans_Condensed','Noto_Sans',sans-serif] text-[11px] text-white">
      <div className="flex h-[19px] items-center justify-between bg-[#a9a9a9] px-[13px]">
        <span>Ray Tracing</span>
        <svg width="6" height="5" viewBox="0 0 6 5" aria-hidden>
          <path d="M0 5h6L3 0z" fill="#333" />
        </svg>
        <span>Interactive</span>
      </div>
      <div className="px-[9px] pt-[10px] pb-[9px]">
        <div className="flex justify-between px-[5px] leading-4">
          <span>Progress 100%</span>
          <span>1 sec</span>
        </div>
        <div
          role="progressbar"
          aria-valuenow={100}
          aria-label="Progress"
          className="mt-[6px] h-3 rounded-full border border-[#333] bg-[#4c4c4c] px-[3px] py-[2px]"
        >
          <div className="h-full w-full rounded-[2px] border border-white bg-[#aaa]" />
        </div>
        <div className="mt-[10px] flex justify-end gap-[43px] px-[5px] leading-4">
          <button disabled className="text-[#9a9a9a]">
            Pause
          </button>
          <button className="text-black">Disable</button>
        </div>
      </div>
    </section>
  )
}

function Viewport() {
  return (
    <main className="relative flex flex-1 items-center justify-center border-t-2 border-r-2 border-l-2 border-t-[#6c6c6c] border-r-[#e8e8e8] border-l-[#777] bg-[#c4c4c4]">
      <div className="absolute top-[6px] right-[2px] flex items-end gap-[9px]">
        <button aria-label="Minimize document" className="h-1 w-3 border border-[#444] bg-white" />
        <button aria-label="Restore document">
          <Icon size={11} box={11}>
            <path d="M3 .5h7.500V8H8" fill="#fff" stroke="#444" />
            <path d="M.5 2.500h7.500v8H.5z" fill="#fff" stroke="#444" />
            <path d="M3 5.500h2.500v2.500H3z" stroke="#444" />
          </Icon>
        </button>
        <button aria-label="Close document">
          <Icon size={11} box={11}>
            <path d="M1.500 1.500l8 8M9.500 1.500l-8 8" stroke="#444" strokeWidth="4" />
            <path d="M1.500 1.500l8 8M9.500 1.500l-8 8" stroke="#fff" strokeWidth="1.800" />
          </Icon>
        </button>
      </div>
      <FilterModel />
      <ViewCube />
      <Triad />
      <RayTracingPanel />
    </main>
  )
}

function DocumentTabs() {
  return (
    <div className="flex h-[23px] items-start border-t-2 border-b-2 border-t-white border-b-[#999] bg-linear-to-b from-[#dcdcdc] to-[#a4a4a4] text-[11px] text-[#222]">
      <button aria-label="Cascade documents" className="flex h-[18px] w-[20px] items-center justify-center border border-[#444] bg-[#e4e4e4]">
        <Icon>
          <MiniWindow x={0} y={1} w={11} h={8} />
          <MiniWindow x={2} y={4} w={11} h={8} />
          <MiniWindow x={5} y={7} w={11} h={8} />
        </Icon>
      </button>
      <button aria-label="Tile documents" className="flex h-[18px] w-[20px] items-center justify-center border border-[#444] bg-[#e4e4e4]">
        <Icon>
          <MiniWindow x={0} y={2} w={7} h={5} />
          <MiniWindow x={9} y={2} w={7} h={5} />
          <MiniWindow x={0} y={9} w={7} h={5} />
          <MiniWindow x={9} y={9} w={7} h={5} />
        </Icon>
      </button>
      <button aria-label="Document list" className="flex h-[18px] w-[20px] justify-center border border-[#444] bg-[#e4e4e4] pt-[4px]">
        <svg width="9" height="5" viewBox="0 0 9 5" aria-hidden>
          <path d="M0 5h9L4.500 0z" fill="#222" />
        </svg>
      </button>
      <button className="ml-[2px] h-[18px] w-[88px] rounded-b-[5px] border border-t-0 border-[#555] bg-linear-to-b from-[#c8c8c8] to-[#b4b4b4] leading-4">
        Filter Mk5.ipt
      </button>
      <button className="h-[18px] w-[132px] rounded-b-[5px] border border-t-0 border-[#555] bg-linear-to-b from-[#c8c8c8] to-[#b4b4b4] leading-4">
        Mesh for Filter M...ipt
      </button>
      <button className="flex h-[18px] w-[88px] justify-center gap-[7px] rounded-b-[5px] border border-t-0 border-[#555] bg-white leading-4">
        Assembly1
        <svg className="mt-[2px]" width="8" height="8" viewBox="0 0 8 8" fill="none" aria-hidden>
          <path d="M1 1l6 6M7 1L1 7" stroke="#666" strokeWidth="3" />
          <path d="M1 1l6 6M7 1L1 7" stroke="#fff" />
        </svg>
      </button>
    </div>
  )
}

export default function App() {
  return (
    <div className="relative flex min-h-screen flex-col bg-[#f0f0f0] font-['Open_Sans','Noto_Sans',sans-serif]">
      <Defs />
      <TitleBar />
      <TabRow />
      {/* Application menu hangs over the title bar and the tab row */}
      <button
        aria-label="Application menu"
        className="absolute top-0 left-0 flex h-[41px] w-[41px] items-center gap-1 border border-black bg-linear-to-b from-[#c4c4c4] to-[#707070] pl-[6px] shadow-[inset_0_0_0_1px_#aaa]"
      >
        <span className="flex flex-col items-center">
          <svg width="20" height="27" viewBox="0 0 20 27" aria-hidden>
            <path d="M1 1h18v6l-5 2v9l5 2v6H1v-6l5-2V9L1 7z" fill="#c84c10" />
            <path d="M1 1h18l-5 8H6L1 7z" fill="#e87020" />
            <path d="M10 9h4v9l5 2v6l-9-8z" fill="#8c2c08" />
          </svg>
          <span className="font-['Liberation_Sans',sans-serif] text-[8px] leading-[9px] font-bold text-black">PRO</span>
        </span>
        <Arrow className="text-[#222]" />
      </button>
      <Ribbon />
      <div className="flex flex-1 border-t border-[#bbb]">
        <ModelBrowser />
        <div className="flex min-w-0 flex-1 flex-col">
          <Viewport />
          <DocumentTabs />
        </div>
      </div>
    </div>
  )
}
